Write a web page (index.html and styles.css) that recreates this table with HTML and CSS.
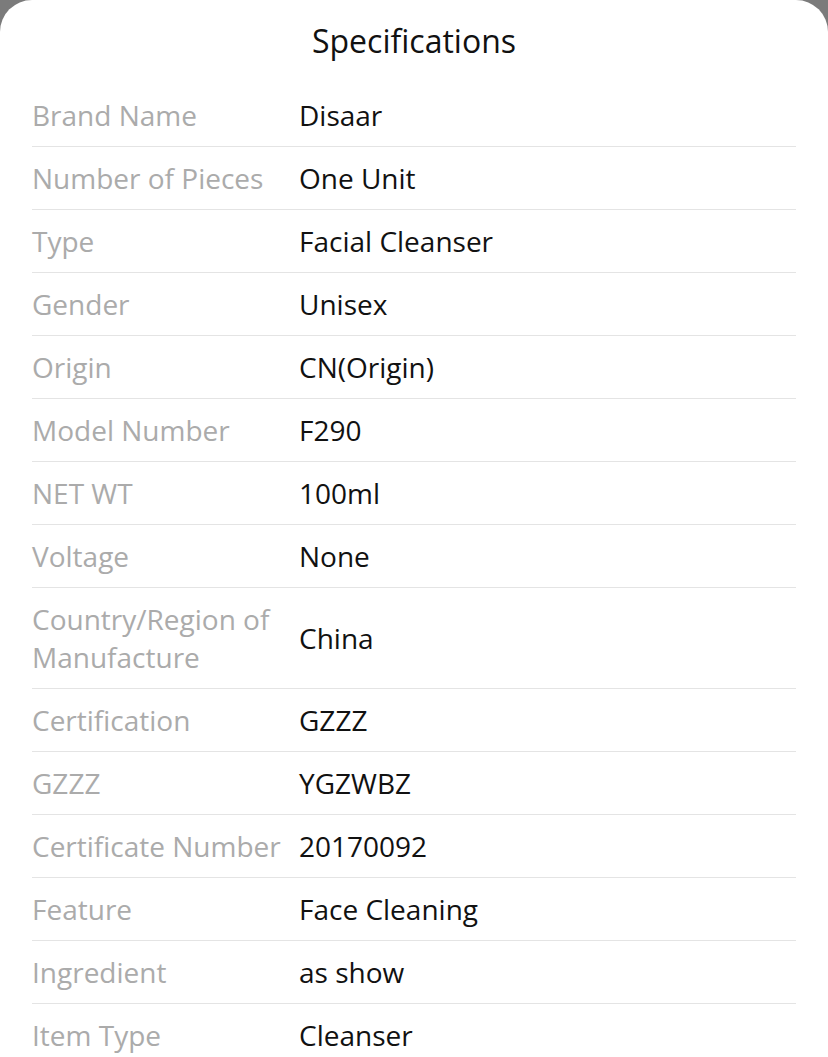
FILE: index.html
```html
<!DOCTYPE html>
<html lang="en">
<head>
    <meta charset="UTF-8">
    <meta name="viewport" content="width=device-width, initial-scale=1.0">
    <title>Specifications</title>
    <link rel="stylesheet" href="styles.css">
</head>
<body>
    <div class="sheet">
        <h2 class="sheet-title">Specifications</h2>
        <div class="spec-list">
            <div class="spec-row"><div class="spec-label">Brand Name</div><div class="spec-value">Disaar</div></div>
            <div class="spec-row"><div class="spec-label">Number of Pieces</div><div class="spec-value">One Unit</div></div>
            <div class="spec-row"><div class="spec-label">Type</div><div class="spec-value">Facial Cleanser</div></div>
            <div class="spec-row"><div class="spec-label">Gender</div><div class="spec-value">Unisex</div></div>
            <div class="spec-row"><div class="spec-label">Origin</div><div class="spec-value">CN(Origin)</div></div>
            <div class="spec-row"><div class="spec-label">Model Number</div><div class="spec-value">F290</div></div>
            <div class="spec-row"><div class="spec-label">NET WT</div><div class="spec-value">100ml</div></div>
            <div class="spec-row"><div class="spec-label">Voltage</div><div class="spec-value">None</div></div>
            <div class="spec-row"><div class="spec-label">Country/Region of Manufacture</div><div class="spec-value">China</div></div>
            <div class="spec-row"><div class="spec-label">Certification</div><div class="spec-value">GZZZ</div></div>
            <div class="spec-row"><div class="spec-label">GZZZ</div><div class="spec-value">YGZWBZ</div></div>
            <div class="spec-row"><div class="spec-label">Certificate Number</div><div class="spec-value">20170092</div></div>
            <div class="spec-row"><div class="spec-label">Feature</div><div class="spec-value">Face Cleaning</div></div>
            <div class="spec-row"><div class="spec-label">Ingredient</div><div class="spec-value">as show</div></div>
            <div class="spec-row"><div class="spec-label">Item Type</div><div class="spec-value">Cleanser</div></div>
        </div>
    </div>
</body>
</html>
```

FILE: styles.css
```css
body {
    margin: 0;
    padding: 0;
    background: #7b7b7b;
    font-family: "Open Sans", Arial, sans-serif;
    height: 100vh;
    overflow: hidden;
}
.sheet {
    background: #fff;
    border-radius: 32px 32px 0 0;
    padding: 0 32px;
    min-height: 100vh;
}
.sheet-title {
    margin: 0;
    height: 84px;
    line-height: 82px;
    text-align: center;
    font-size: 32px;
    font-weight: 400;
    color: #111;
}
.spec-row {
    display: flex;
    align-items: center;
    padding: 12px 0;
    border-bottom: 1px solid #e4e4e4;
    font-size: 28px;
    line-height: 38px;
}
.spec-label {
    width: 254px;
    flex-shrink: 0;
    margin-right: 13px;
    color: #ababab;
}
.spec-value {
    color: #111;
}
```
